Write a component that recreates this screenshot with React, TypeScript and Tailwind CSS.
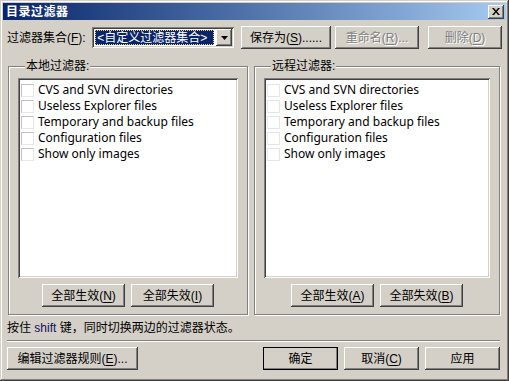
import React from 'react';

const raised =
  'bg-[#d4d0c8] shadow-[inset_-1px_-1px_#404040,inset_1px_1px_#ffffff,inset_-2px_-2px_#808080,inset_2px_2px_#d4d0c8]';
const sunken =
  'shadow-[inset_1px_1px_#808080,inset_-1px_-1px_#ffffff,inset_2px_2px_#404040,inset_-2px_-2px_#d4d0c8]';

const filters = [
  'CVS and SVN directories',
  'Useless Explorer files',
  'Temporary and backup files',
  'Configuration files',
  'Show only images',
];

function Btn({
  label,
  hot,
  tail = '',
  w,
  disabled = false,
  isDefault = false,
}: {
  label: string;
  hot?: string;
  tail?: string;
  w: string;
  disabled?: boolean;
  isDefault?: boolean;
}) {
  return (
    <div
      className={`${w} h-[23px] flex items-center justify-center ${raised} ${
        isDefault ? 'outline outline-1 outline-black -outline-offset-1' : ''
      } ${disabled ? 'text-[#808080] [text-shadow:1px_1px_0_#ffffff]' : 'text-black'}`}
    >
      <span className="leading-none">
        {label}
        {hot && (
          <>
            (<span className="underline underline-offset-2">{hot}</span>)
          </>
        )}
        {tail}
      </span>
    </div>
  );
}

function FilterGroup({
  title,
  w,
  buttons,
  faint,
}: {
  title: string;
  w: string;
  buttons: [string, string];
  faint?: boolean;
}) {
  return (
    <fieldset
      className={`${w} h-[256px] border border-[#808080] shadow-[1px_1px_0_#ffffff,inset_1px_1px_0_#ffffff] px-[9px]`}
    >
      <legend className="ml-[7px] px-[1px] bg-[#d4d0c8] leading-[14px]">{title}:</legend>
      <div className={`mt-[5px] h-[200px] bg-white ${sunken} pt-[4px] pl-[3px]`}>
        {filters.map((f) => (
          <div key={f} className="h-[16px] flex items-center">
            <div
              className={`w-[13px] h-[13px] bg-white border ${
                faint
                  ? 'border-[#e6e6e6]'
                  : 'border-t-[#c0c0c0] border-l-[#c0c0c0] border-r-[#e8e8e8] border-b-[#e8e8e8]'
              }`}
            />
            <span className="ml-[4px] text-[12px] text-black font-['Noto_Sans',sans-serif] leading-none">
              {f}
            </span>
          </div>
        ))}
      </div>
      <div className="mt-[6px] flex justify-center gap-[6px]">
        <Btn label="全部生效" hot={buttons[0]} w="w-[83px]" />
        <Btn label="全部失效" hot={buttons[1]} w="w-[83px]" />
      </div>
    </fieldset>
  );
}

export default function App() {
  return (
    <div className="w-[509px] h-[381px] bg-[#d4d0c8] text-[12px] text-black font-['Liberation_Sans','Noto_Sans_CJK_SC',sans-serif] shadow-[inset_-1px_-1px_#404040,inset_1px_1px_#d4d0c8,inset_-2px_-2px_#808080,inset_2px_2px_#ffffff] pt-[3px] px-[3px] overflow-hidden">
      {/* title bar */}
      <div className="h-[17px] flex items-center justify-between pl-[3px] pr-[2px] bg-gradient-to-r from-[#0a246a] to-[#a6caf0]">
        <span className="text-white font-bold text-[12px] leading-none tracking-[0.5px]">目录过滤器</span>
        <div className={`w-[16px] h-[14px] flex items-center justify-center ${raised}`}>
          <svg width="8" height="7" viewBox="0 0 8 7">
            <path d="M0 0h2l2 2.5L6 0h2L5 3.5 8 7H6L4 4.5 2 7H0l3-3.5z" fill="#000" />
          </svg>
        </div>
      </div>

      <div className="px-[4px]">
        {/* row 1 */}
        <div className="mt-[6px] h-[23px] flex items-center">
          <span className="w-[86px]">
            过滤器集合(<span className="underline underline-offset-2">F</span>):
          </span>
          <div className={`w-[143px] h-[21px] bg-white ${sunken} p-[2px] flex`}>
            <div className="flex-1 flex items-center pl-[1px] pr-[2px]">
              <div className="h-[15px] w-full bg-[#0a246a] text-white outline-1 outline-dotted outline-[#f0d070] -outline-offset-1 flex items-center pl-[2px] leading-none">
                &lt;自定义过滤器集合&gt;
              </div>
            </div>
            <div className={`w-[16px] h-[17px] flex items-center justify-center ${raised}`}>
              <svg width="7" height="4" viewBox="0 0 7 4">
                <path d="M0 0h7L3.5 4z" fill="#000" />
              </svg>
            </div>
          </div>
          <div className="ml-[7px] flex gap-[4px]">
            <Btn label="保存为" hot="S" tail="......" w="w-[90px]" />
            <Btn label="重命名" hot="R" tail="..." w="w-[84px]" disabled />
            <div className="w-[1px]" />
            <Btn label="删除" hot="D" w="w-[74px]" disabled />
          </div>
        </div>

        {/* groups */}
        <div className="mt-[10px] ml-[1px] flex gap-[6px]">
          <FilterGroup title="本地过滤器" w="w-[240px]" buttons={['N', 'I']} />
          <FilterGroup title="远程过滤器" w="w-[246px]" buttons={['A', 'B']} faint />
        </div>

        <div className="mt-[5px] h-[16px] leading-[16px]">
          按住 <span className="text-[#10105a]">shift</span> 键，同时切换两边的过滤器状态。
        </div>

        <div className="mt-[4px] mr-[2px] h-[2px] border-t border-t-[#808080] border-b border-b-[#ffffff]" />

        <div className="mt-[5px] flex">
          <Btn label="编辑过滤器规则" hot="E" tail="..." w="w-[131px]" />
          <div className="ml-auto mr-[2px] flex gap-[6px]">
            <Btn label="确定" w="w-[75px]" isDefault />
            <Btn label="取消" hot="C" w="w-[75px]" />
            <Btn label="应用" w="w-[75px]" />
          </div>
        </div>
      </div>
    </div>
  );
}
